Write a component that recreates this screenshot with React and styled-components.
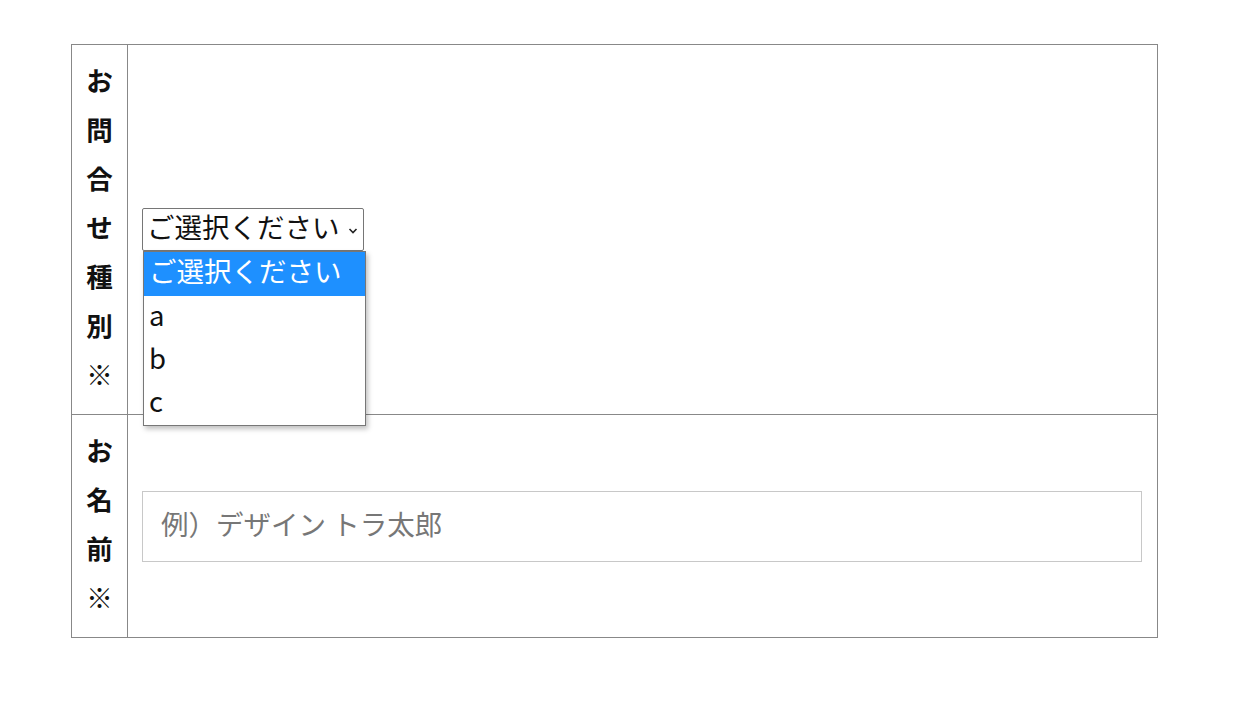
import React from "react";
import styled, { createGlobalStyle } from "styled-components";

const GlobalStyle = createGlobalStyle`
  body {
    margin: 0;
    background: #fff;
    font-family: "Noto Sans CJK JP", "Noto Sans", sans-serif;
    color: #111;
  }
`;

const Page = styled.div`
  padding: 44px 0 0 71px;
`;

const FormTable = styled.table`
  width: 1087px;
  border-collapse: collapse;
  border: 1px solid #888;
`;

const Label = styled.th`
  width: 55px;
  padding: 10px 0 16px;
  border: 1px solid #888;
  font-size: 26.5px;
  font-weight: 700;
  line-height: 49px;
  text-align: center;
  vertical-align: middle;
`;

const LabelChar = styled.span`
  display: block;
`;

const Field = styled.td`
  padding: 13px 15px 13px 14px;
  border: 1px solid #888;
  vertical-align: middle;
`;

const SelectWrap = styled.div`
  position: relative;
  display: inline-block;
`;

const SelectBox = styled.div`
  box-sizing: border-box;
  width: 222px;
  height: 43px;
  padding: 0 5px 5px 4px;
  display: flex;
  align-items: center;
  justify-content: space-between;
  border: 1px solid #767676;
  border-radius: 2px;
  font-size: 27.5px;
  line-height: 1;
  color: #111;
  background: #fff;
  white-space: nowrap;
`;

const Chevron = styled.svg`
  width: 10px;
  height: 8px;
  margin-top: 8px;
  flex-shrink: 0;
`;

const ListBox = styled.ul`
  position: absolute;
  top: 43px;
  left: 1px;
  box-sizing: border-box;
  width: 223px;
  margin: 0;
  padding: 0;
  list-style: none;
  background: #fff;
  border: 1px solid #777;
  box-shadow: 2px 3px 5px rgba(0, 0, 0, 0.25);
  z-index: 2;
`;

const Option = styled.li`
  height: ${p => (p.$first ? 44 : 43)}px;
  padding: 0 5px 6px;
  box-sizing: border-box;
  display: flex;
  align-items: center;
  font-size: 27.5px;
  line-height: 1;
  background: ${p => (p.$active ? "#1e90ff" : "#fff")};
  color: ${p => (p.$active ? "#fff" : "#111")};
`;

const TextInput = styled.input`
  box-sizing: border-box;
  display: block;
  width: 100%;
  height: 71px;
  padding: 0 18px 7px;
  border: 1px solid #c8c8c8;
  font-family: inherit;
  font-size: 27.5px;
  outline: none;
  &::placeholder {
    color: #777;
  }
`;

const options = ["ご選択ください", "a", "b", "c"];

const VerticalLabel = ({ text }) => (
  <Label>
    {Array.from(text).map((c, i) => (
      <LabelChar key={i}>{c}</LabelChar>
    ))}
  </Label>
);

export default function App() {
  return (
    <Page>
      <GlobalStyle />
      <FormTable>
        <tbody>
          <tr>
            <VerticalLabel text="お問合せ種別※" />
            <Field>
              <SelectWrap>
                <SelectBox>
                  <span>ご選択ください</span>
                  <Chevron viewBox="0 0 10 8">
                    <path d="M1.5 2 L5 5.5 L8.5 2" fill="none" stroke="#222" strokeWidth="1.6" />
                  </Chevron>
                </SelectBox>
                <ListBox>
                  {options.map((o, i) => (
                    <Option key={o} $active={i === 0} $first={i === 0}>
                      {o}
                    </Option>
                  ))}
                </ListBox>
              </SelectWrap>
            </Field>
          </tr>
          <tr>
            <VerticalLabel text="お名前※" />
            <Field>
              <TextInput placeholder="例）デザイン トラ太郎" />
            </Field>
          </tr>
        </tbody>
      </FormTable>
    </Page>
  );
}
